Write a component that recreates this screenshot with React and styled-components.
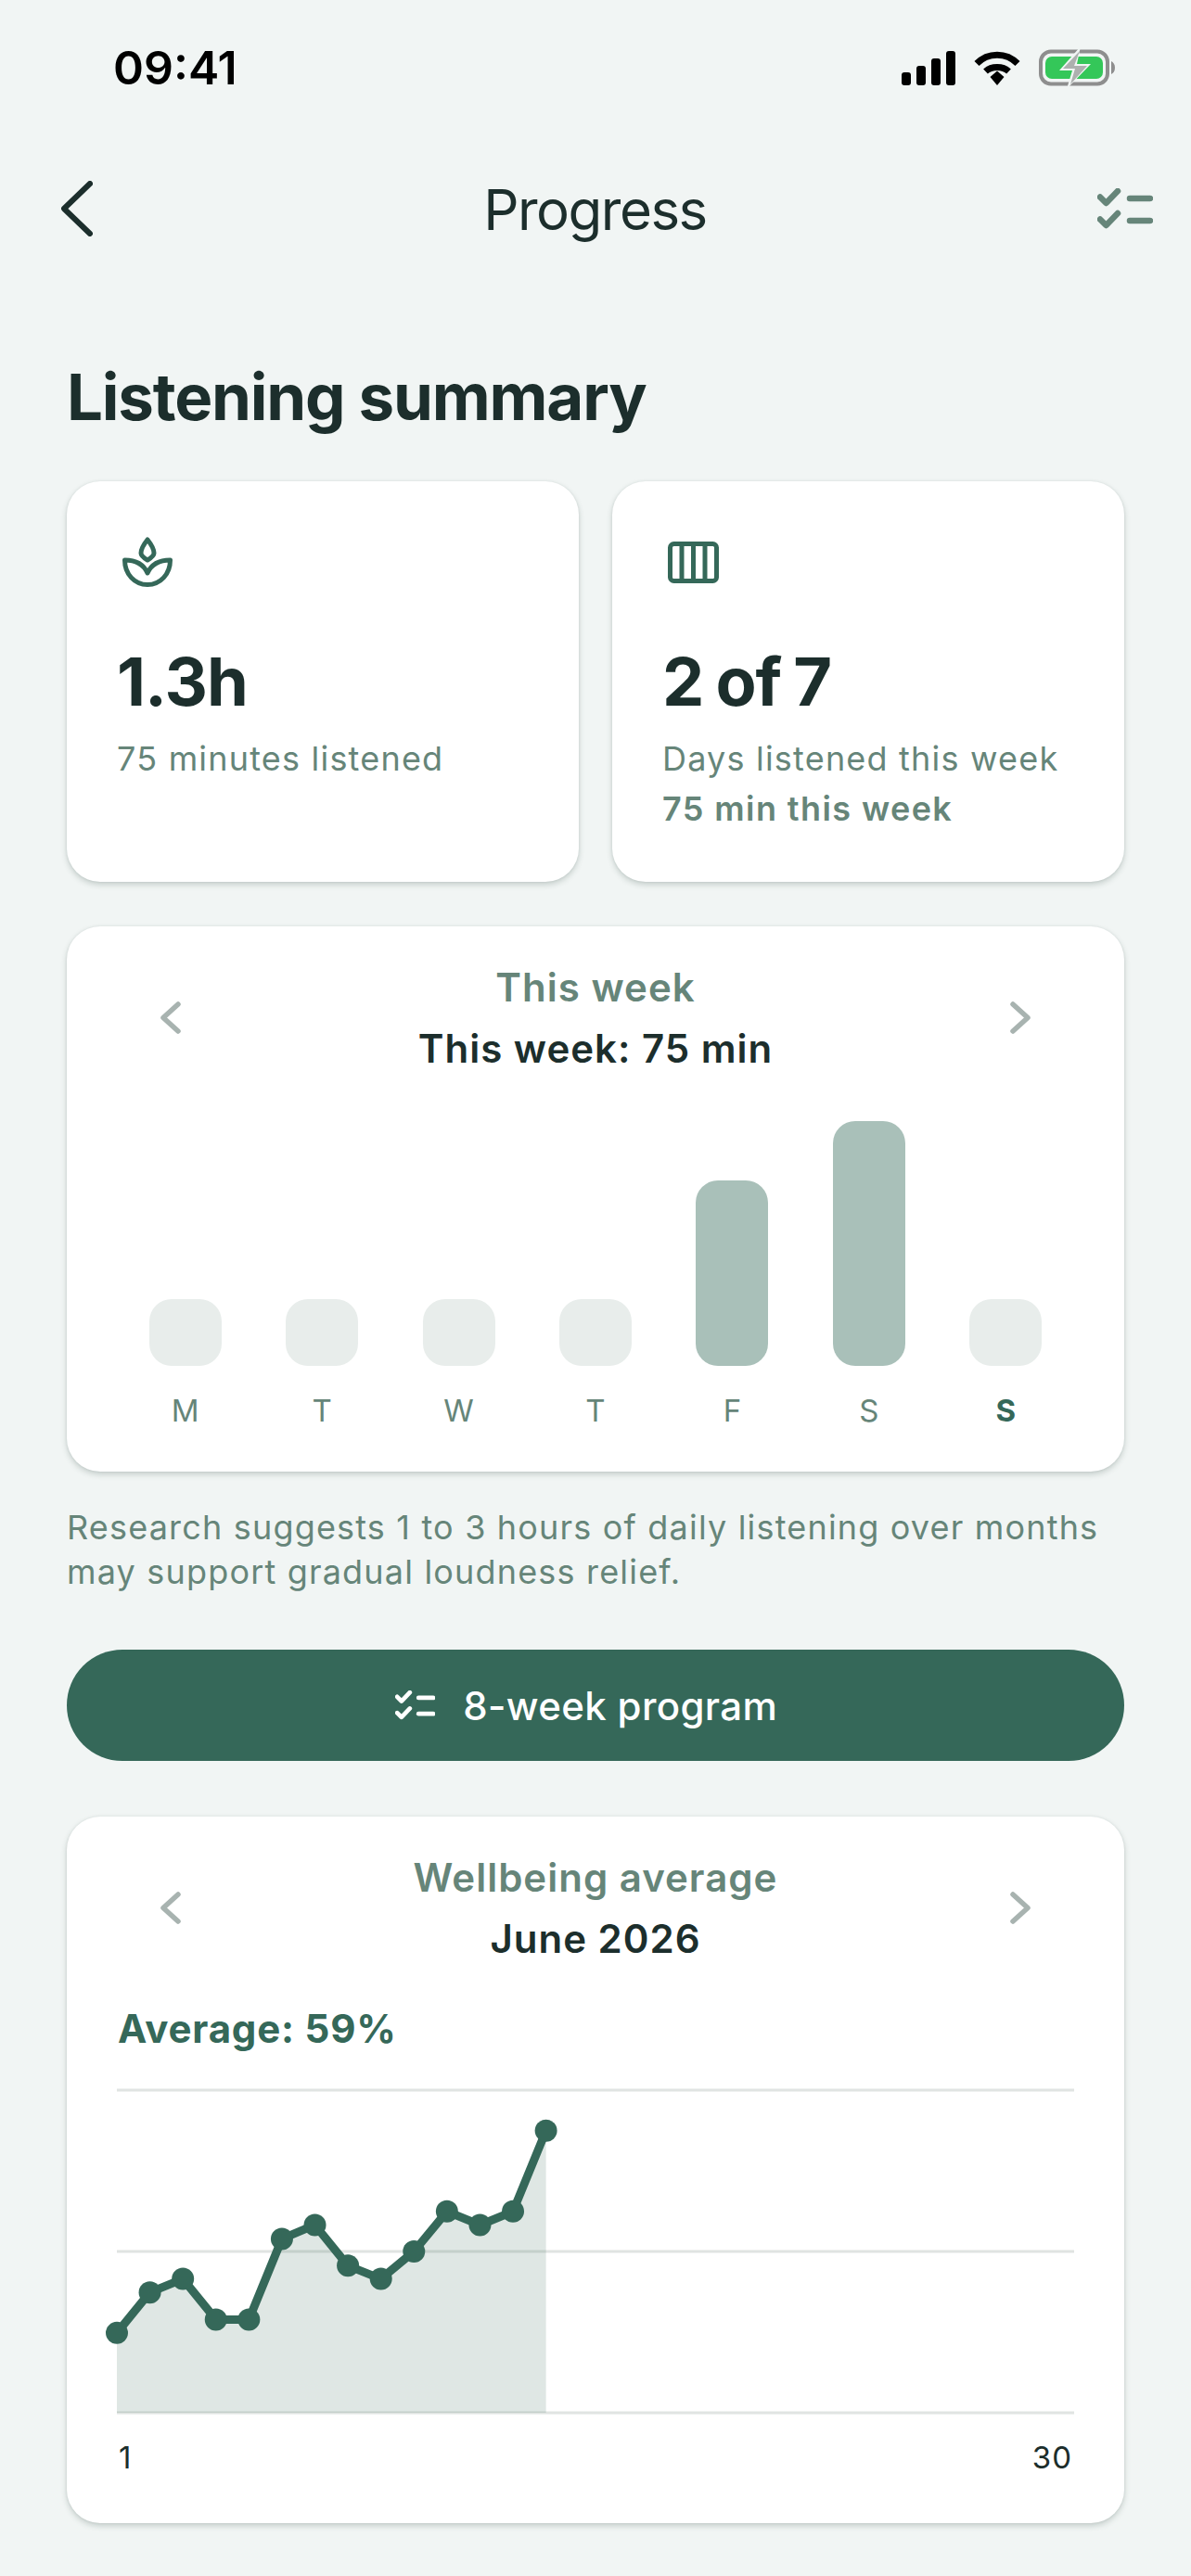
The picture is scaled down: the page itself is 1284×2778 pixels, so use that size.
import React from 'react'
import styled, { createGlobalStyle } from 'styled-components'

const GlobalStyle = createGlobalStyle`
  html, body {
    margin: 0;
    padding: 0;
    background: #f1f5f4;
    font-family: Inter, "Liberation Sans", sans-serif;
  }
  * { box-sizing: border-box; }
`;

const Page = styled.div`
  width: 1284px;
  min-height: 2778px;
  background: #f1f5f4;
`;
const StatusBar = styled.div`
  height: 146px;
  padding: 0 80px 0 122px;
  display: flex;
  align-items: center;
  justify-content: space-between;
`;
const Time = styled.div`
  font-size: 50px;
  font-weight: 600;
  color: #000;
`;
const StatusIcons = styled.div`
  display: flex;
  align-items: center;
  gap: 20px;
`;
const NavBar = styled.div`
  height: 158px;
  padding: 0 41px 0 66px;
  display: flex;
  align-items: center;
  justify-content: space-between;
`;
const NavTitle = styled.div`
  font-size: 60px;
  font-weight: 400;
  color: #1c2e2c;
  letter-spacing: -1.5px;
  padding-top: 2px;
`;
const Content = styled.div`
  padding: 0 72px;
  display: flex;
  flex-direction: column;
`;
const Title = styled.h1`
  margin: 82px 0 49px;
  font-size: 69px;
  line-height: 84px;
  font-weight: 700;
  color: #1c2e2c;
  letter-spacing: -1.2px;
`;
const SummaryGrid = styled.div`
  display: grid;
  grid-template-columns: 1fr 1fr;
  gap: 36px;
`;
const Card = styled.div`
  background: #fff;
  border-radius: 36px;
  padding: ${p => p.$padding};
  box-shadow: 0 0 3px rgba(40, 70, 60, 0.08), 0 3px 6px rgba(40, 70, 60, 0.22);
`;
const SummaryCard = styled(Card)`
  height: 432px;
`;
const StatIcon = styled.div`
  width: 66px;
  height: 66px;
  margin-bottom: 54px;
`;
const StatValue = styled.div`
  font-size: 72px;
  line-height: 84px;
  font-weight: 700;
  color: #1c2e2c;
  letter-spacing: -1px;
  word-spacing: -3px;
`;
const StatLabel = styled.div`
  margin-top: ${p => (p.$strong ? 0 : 14)}px;
  font-size: 36px;
  line-height: 54px;
  font-weight: ${p => (p.$strong ? 600 : 400)};
  color: #668579;
  letter-spacing: ${p => (p.$strong ? 1.4 : 1.2)}px;
`;
const WeekCard = styled(Card)`
  margin-top: 48px;
  height: 588px;
`;
const PeriodHeader = styled.div`
  display: flex;
  align-items: center;
  justify-content: space-between;
  padding: 0 47px;
`;
const PeriodText = styled.div`
  display: flex;
  flex-direction: column;
  align-items: center;
  gap: 3px;
`;
const PeriodTitle = styled.div`
  font-size: 42px;
  line-height: 63px;
  font-weight: 600;
  color: #668579;
  letter-spacing: 1px;
`;
const PeriodSub = styled.div`
  font-size: 42px;
  line-height: 63px;
  font-weight: 600;
  color: #1c2e2c;
  letter-spacing: 1px;
`;
const Bars = styled.div`
  margin-top: 47px;
  display: flex;
  align-items: flex-end;
  height: 264px;
`;
const BarSlot = styled.div`
  flex: 1;
  display: flex;
  justify-content: center;
`;
const Bar = styled.div`
  width: 78px;
  height: ${p => p.$height}px;
  border-radius: 24px;
  background: ${p => (p.$active ? '#a9c0b9' : '#e8edeb')};
`;
const DayRow = styled.div`
  margin-top: 27px;
  display: flex;
`;
const Day = styled.div`
  flex: 1;
  text-align: center;
  font-size: 33px;
  line-height: 42px;
  font-weight: ${p => (p.$today ? 700 : 400)};
  color: ${p => (p.$today ? '#356859' : '#668579')};
`;
const Note = styled.p`
  margin: 36px 0 60px;
  font-size: 36px;
  line-height: 48px;
  color: #668579;
  letter-spacing: 1.18px;
`;
const ProgramButton = styled.button`
  height: 120px;
  border: none;
  border-radius: 60px;
  padding: 0 20px 0 0;
  background: #356859;
  color: #fff;
  display: flex;
  align-items: center;
  justify-content: center;
  gap: 30px;
  font-family: inherit;
  font-size: 42px;
  font-weight: 500;
  letter-spacing: 0.35px;
`;
const ChartCard = styled(Card)`
  margin-top: 60px;
  height: 762px;
`;
const Average = styled.div`
  margin-top: 36px;
  padding-left: 1px;
  font-size: 42px;
  line-height: 60px;
  font-weight: 700;
  color: #356859;
  letter-spacing: 0.8px;
`;
const Plot = styled.svg`
  display: block;
  margin-top: 36px;
  overflow: visible;
`;
const AxisLabels = styled.div`
  margin-top: 27px;
  display: flex;
  justify-content: space-between;
  font-size: 33px;
  line-height: 42px;
  color: #1c2e2c;
  letter-spacing: 1px;
  padding: 0 2px;
`;

const Signal = () => (
  <svg width="58" height="37" viewBox="0 0 58 37" fill="#000">
    <rect x="0" y="23" width="10" height="14" rx="3" />
    <rect x="16" y="16" width="10" height="21" rx="3" />
    <rect x="32" y="8" width="10" height="29" rx="3" />
    <rect x="48" y="0" width="10" height="37" rx="3" />
  </svg>
)

const Wifi = () => (
  <svg width="50" height="37" viewBox="0 0 50 37" fill="none" stroke="#000">
    <path d="M3 13.5 C15 1 35 1 47 13.5" strokeWidth="7" />
    <path d="M12.5 22 C19 16 31 16 37.5 22" strokeWidth="7" />
    <path d="M17.5 28 L25 21.5 L32.5 28 L25 37 Z" fill="#000" stroke="none" />
  </svg>
)

const Battery = () => (
  <svg width="84" height="42" viewBox="0 0 84 42">
    <rect x="2" y="3.5" width="72" height="35" rx="11" fill="none" stroke="#8e8e8e" strokeWidth="4" />
    <rect x="7" y="9" width="62" height="24" rx="7" fill="#34c759" />
    <path d="M82 21 C82 17 80 15 78 14 L78 28 C80 27 82 25 82 21 Z" fill="#8e8e8e" />
    <path d="M45 -2 L22 24 L36 24 L30 44 L56 17 L41 17 Z" fill="#f1f5f4" />
    <path d="M44 3 L26 22 L39 22 L34 39 L52 19 L38 19 Z" fill="#adb0af" />
  </svg>
)

const Checklist = ({ color, scale = 1 }) => (
  <svg width={60 * scale} height={44 * scale} viewBox="0 0 60 44" fill="none" stroke={color} strokeWidth="6.5" strokeLinecap="round" strokeLinejoin="round">
    <path d="M3 9.5 L9.5 16 L22 3" />
    <path d="M3 33.5 L9.5 40 L22 27" />
    <path d="M35 11 H57" />
    <path d="M35 35 H57" />
  </svg>
)

const Chevron = ({ dir = 'left', color, width = 22, height = 35, stroke = 5.5 }) => (
  <svg width={width} height={height} viewBox={`0 0 ${width} ${height}`} fill="none" stroke={color} strokeWidth={stroke} strokeLinecap="round" strokeLinejoin="round">
    {dir === 'left'
      ? <path d={`M${width - 3} 3 L3 ${height / 2} L${width - 3} ${height - 3}`} />
      : <path d={`M3 3 L${width - 3} ${height / 2} L3 ${height - 3}`} />}
  </svg>
)

const Sprout = () => (
  <svg width="66" height="66" viewBox="0 0 66 66" fill="none" stroke="#356859" strokeWidth="5" strokeLinejoin="round">
    <path d="M33 9 C37 14 40 19 40 23.5 C40 26 38 28 33 31 C28 28 26 26 26 23.5 C26 19 29 14 33 9 Z" />
    <path d="M33 57.5 C19 57.5 8.5 46 8.5 31 C21 31 29 36 33 45 C37 36 45 31 57.5 31 C57.5 46 47 57.5 33 57.5 Z" />
  </svg>
)

const Calendar = () => (
  <svg width="66" height="66" viewBox="0 0 66 66" fill="none" stroke="#356859" strokeWidth="5">
    <rect x="8.5" y="13.5" width="50" height="40" rx="4" />
    <path d="M21 13 V54 M33.5 13 V54 M46 13 V54" />
  </svg>
)

const week = [
  { day: 'M', height: 72 },
  { day: 'T', height: 72 },
  { day: 'W', height: 72 },
  { day: 'T', height: 72 },
  { day: 'F', height: 200, active: true },
  { day: 'S', height: 264, active: true },
  { day: 'S', height: 72, today: true },
]

const wellbeing = [0.2475, 0.373, 0.415, 0.289, 0.289, 0.539, 0.582, 0.456, 0.415, 0.5, 0.624, 0.582, 0.624, 0.874]

const WellbeingPlot = () => {
  const w = 1032
  const h = 348
  const pts = wellbeing.map((v, i) => [(i * w) / 29, h * (1 - v)])
  const line = pts.map(p => p.join(',')).join(' ')
  const area = `0,${h} ${line} ${pts[pts.length - 1][0]},${h}`
  return (
    <Plot width={w} height={h} viewBox={`0 0 ${w} ${h}`}>
      {[0, h / 2, h].map(y => (
        <line key={y} x1="0" x2={w} y1={y} y2={y} stroke="#e0e4e2" strokeWidth="3" />
      ))}
      <polygon points={area} fill="rgba(53,104,89,0.16)" />
      <polyline points={line} fill="none" stroke="#356859" strokeWidth="9" strokeLinejoin="round" />
      {pts.map(([x, y], i) => (
        <circle key={i} cx={x} cy={y} r="12" fill="#356859" />
      ))}
    </Plot>
  )
}

export default function App() {
  return (
    <Page>
      <GlobalStyle />
      <StatusBar>
        <Time>09:41</Time>
        <StatusIcons>
          <Signal />
          <Wifi />
          <Battery />
        </StatusIcons>
      </StatusBar>
      <NavBar>
        <Chevron color="#1c2e2c" width={34} height={60} stroke={6} />
        <NavTitle>Progress</NavTitle>
        <Checklist color="#668579" />
      </NavBar>
      <Content>
        <Title>Listening summary</Title>
        <SummaryGrid>
          <SummaryCard $padding="54px">
            <StatIcon><Sprout /></StatIcon>
            <StatValue>1.3h</StatValue>
            <StatLabel>75 minutes listened</StatLabel>
          </SummaryCard>
          <SummaryCard $padding="54px">
            <StatIcon><Calendar /></StatIcon>
            <StatValue>2 of 7</StatValue>
            <StatLabel>Days listened this week</StatLabel>
            <StatLabel $strong>75 min this week</StatLabel>
          </SummaryCard>
        </SummaryGrid>
        <WeekCard $padding="34px 54px">
          <PeriodHeader>
            <Chevron color="#a8b3b0" />
            <PeriodText>
              <PeriodTitle>This week</PeriodTitle>
              <PeriodSub>This week: 75 min</PeriodSub>
            </PeriodText>
            <Chevron dir="right" color="#a8b3b0" />
          </PeriodHeader>
          <Bars>
            {week.map((d, i) => (
              <BarSlot key={i}><Bar $height={d.height} $active={d.active} /></BarSlot>
            ))}
          </Bars>
          <DayRow>
            {week.map((d, i) => (
              <Day key={i} $today={d.today}>{d.day}</Day>
            ))}
          </DayRow>
        </WeekCard>
        <Note>Research suggests 1 to 3 hours of daily listening over months may support gradual loudness relief.</Note>
        <ProgramButton>
          <Checklist color="#fff" scale={0.72} />
          8-week program
        </ProgramButton>
        <ChartCard $padding="34px 54px">
          <PeriodHeader>
            <Chevron color="#a8b3b0" />
            <PeriodText>
              <PeriodTitle>Wellbeing average</PeriodTitle>
              <PeriodSub>June 2026</PeriodSub>
            </PeriodText>
            <Chevron dir="right" color="#a8b3b0" />
          </PeriodHeader>
          <Average>Average: 59%</Average>
          <WellbeingPlot />
          <AxisLabels>
            <span>1</span>
            <span>30</span>
          </AxisLabels>
        </ChartCard>
      </Content>
    </Page>
  )
}
